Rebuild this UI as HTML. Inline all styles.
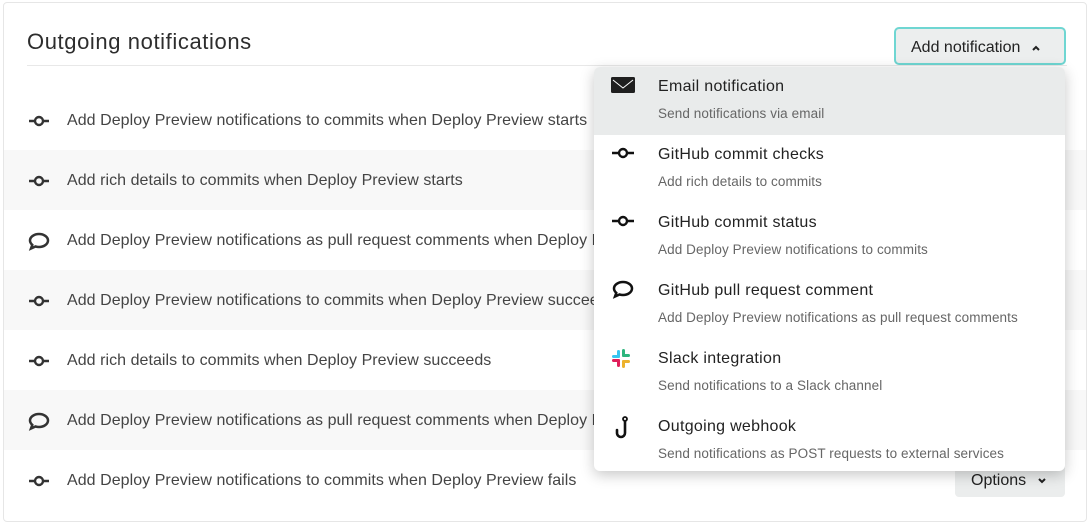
<!DOCTYPE html>
<html><head><style>
*{box-sizing:border-box;margin:0;padding:0}
body{width:1089px;height:511px;background:#fff;font-family:"Liberation Sans",sans-serif;overflow:hidden;position:relative;color:#333}
.card{position:absolute;left:3px;top:2px;width:1084px;height:520px;border:1px solid #e6e6e6;border-radius:4px;background:#fff}
h1{position:absolute;left:27px;top:29px;font-size:22px;letter-spacing:0.6px;font-weight:normal;color:#2d2d2d}
.div{position:absolute;left:27px;top:65px;width:1040px;height:1px;background:#e8e8e8}
.btn{position:absolute;left:894px;top:27px;width:172px;height:38px;border:2px solid #6fd6d2;border-radius:5px;background:#eceeee;font-size:16px;color:#222;padding:10px 0 0 15px}
.row{position:absolute;left:4px;width:1082px;height:60px;font-size:16px;color:#444;letter-spacing:0.05px}
.row.g{background:#f8f8f8}
.row svg{position:absolute;left:24px;top:22px}
.row span{position:absolute;left:63px;top:22px;white-space:nowrap}
.opt{position:absolute;left:955px;top:464px;width:110px;height:33px;background:#ebeded;border-radius:4px;font-size:16px;color:#222;padding:8px 0 0 16px}
.dd{position:absolute;left:594px;top:67px;width:471px;height:404px;background:#fff;border-radius:6px;box-shadow:0 4px 14px rgba(0,0,0,.22);overflow:hidden}
.it{position:relative;height:68px}
.it.a{background:#e9ebeb}
.it b{position:absolute;left:64px;top:11px;font-weight:normal;font-size:16px;letter-spacing:0.3px;color:#222}
.it i{position:absolute;left:64px;top:39px;font-style:normal;font-size:13.5px;letter-spacing:0.1px;color:#666}
.it svg{position:absolute;left:16px;top:8px}
</style></head><body>
<div class="card"></div>
<h1>Outgoing notifications</h1>
<div class="div"></div>
<div class="btn">Add notification <svg width="10" height="8" style="margin-left:6px" viewBox="0 0 10 8"><path d="M2 6l3-3 3 3" stroke="#222" stroke-width="2" fill="none"/></svg></div>

<div class="row" style="top:90px"><svg width="22" height="18" viewBox="0 0 22 18"><path d="M1 9h5M16 9h5" stroke="#333" stroke-width="2.4"/><circle cx="11" cy="9" r="4" stroke="#333" stroke-width="2.4" fill="none"/></svg><span>Add Deploy Preview notifications to commits when Deploy Preview starts</span></div>
<div class="row g" style="top:150px"><svg width="22" height="18" viewBox="0 0 22 18"><path d="M1 9h5M16 9h5" stroke="#333" stroke-width="2.4"/><circle cx="11" cy="9" r="4" stroke="#333" stroke-width="2.4" fill="none"/></svg><span>Add rich details to commits when Deploy Preview starts</span></div>
<div class="row" style="top:210px"><svg width="22" height="20" viewBox="0 0 22 20"><path d="M11 2c5 0 9 3 9 6.5S16 15 11 15c-1.3 0-2.5-.2-3.5-.5L3 16.5l1.3-3.6C3 11.7 2 10.2 2 8.5 2 5 6 2 11 2z" stroke="#333" stroke-width="2.5" fill="none"/></svg><span>Add Deploy Preview notifications as pull request comments when Deploy Preview starts</span></div>
<div class="row g" style="top:270px"><svg width="22" height="18" viewBox="0 0 22 18"><path d="M1 9h5M16 9h5" stroke="#333" stroke-width="2.4"/><circle cx="11" cy="9" r="4" stroke="#333" stroke-width="2.4" fill="none"/></svg><span>Add Deploy Preview notifications to commits when Deploy Preview succeeds</span></div>
<div class="row" style="top:330px"><svg width="22" height="18" viewBox="0 0 22 18"><path d="M1 9h5M16 9h5" stroke="#333" stroke-width="2.4"/><circle cx="11" cy="9" r="4" stroke="#333" stroke-width="2.4" fill="none"/></svg><span>Add rich details to commits when Deploy Preview succeeds</span></div>
<div class="row g" style="top:390px"><svg width="22" height="20" viewBox="0 0 22 20"><path d="M11 2c5 0 9 3 9 6.5S16 15 11 15c-1.3 0-2.5-.2-3.5-.5L3 16.5l1.3-3.6C3 11.7 2 10.2 2 8.5 2 5 6 2 11 2z" stroke="#333" stroke-width="2.5" fill="none"/></svg><span>Add Deploy Preview notifications as pull request comments when Deploy Preview succeeds</span></div>
<div class="row" style="top:450px"><svg width="22" height="18" viewBox="0 0 22 18"><path d="M1 9h5M16 9h5" stroke="#333" stroke-width="2.4"/><circle cx="11" cy="9" r="4" stroke="#333" stroke-width="2.4" fill="none"/></svg><span>Add Deploy Preview notifications to commits when Deploy Preview fails</span></div>
<div class="opt">Options <svg width="10" height="8" style="margin-left:6px" viewBox="0 0 10 8"><path d="M2 2l3 3 3-3" stroke="#222" stroke-width="2" fill="none"/></svg></div>

<div class="dd">
<div class="it a"><svg width="26" height="20" viewBox="0 0 26 20"><rect x="1" y="2" width="24" height="16" rx="1.5" fill="#1f1f1f"/><path d="M3 5l10 8 10-8" stroke="#fff" stroke-width="1" fill="none"/></svg><b>Email notification</b><i>Send notifications via email</i></div>
<div class="it"><svg width="26" height="20" viewBox="0 0 26 20"><path d="M2 10h6M18 10h6" stroke="#111" stroke-width="2.4"/><circle cx="13" cy="10" r="4" stroke="#111" stroke-width="2.4" fill="none"/></svg><b>GitHub commit checks</b><i>Add rich details to commits</i></div>
<div class="it"><svg width="26" height="20" viewBox="0 0 26 20"><path d="M2 10h6M18 10h6" stroke="#111" stroke-width="2.4"/><circle cx="13" cy="10" r="4" stroke="#111" stroke-width="2.4" fill="none"/></svg><b>GitHub commit status</b><i>Add Deploy Preview notifications to commits</i></div>
<div class="it"><svg width="26" height="22" viewBox="0 0 26 22"><path d="M13 3c5 0 9 3 9 6.5S18 16 13 16c-1.3 0-2.5-.2-3.5-.5L5 17.5l1.3-3.6C5 12.7 4 11.2 4 9.5 4 6 8 3 13 3z" stroke="#111" stroke-width="2.5" fill="none"/></svg><b>GitHub pull request comment</b><i>Add Deploy Preview notifications as pull request comments</i></div>
<div class="it"><svg width="26" height="24" viewBox="0 0 26 24"><rect x="7" y="3" width="3" height="8" rx="1.5" fill="#36c5f0"/><rect x="2" y="8" width="8" height="3" rx="1.5" fill="#36c5f0"/><rect x="12" y="2" width="3" height="8" rx="1.5" fill="#2eb67d"/><rect x="12" y="7" width="8" height="3" rx="1.5" fill="#2eb67d"/><rect x="2" y="12" width="8" height="3" rx="1.5" fill="#e01e5a"/><rect x="7" y="12" width="3" height="8" rx="1.5" fill="#e01e5a"/><rect x="12" y="13" width="8" height="3" rx="1.5" fill="#ecb22e"/><rect x="12" y="13" width="3" height="8" rx="1.5" fill="#ecb22e"/></svg><b>Slack integration</b><i>Send notifications to a Slack channel</i></div>
<div class="it"><svg width="26" height="26" viewBox="0 0 26 26"><circle cx="15" cy="4" r="2" stroke="#111" stroke-width="1.8" fill="none"/><path d="M15 6v12a4 4 0 0 1-8 0v-3" stroke="#111" stroke-width="2.6" fill="none" stroke-linecap="round"/></svg><b>Outgoing webhook</b><i>Send notifications as POST requests to external services</i></div>
</div>
</body></html>
